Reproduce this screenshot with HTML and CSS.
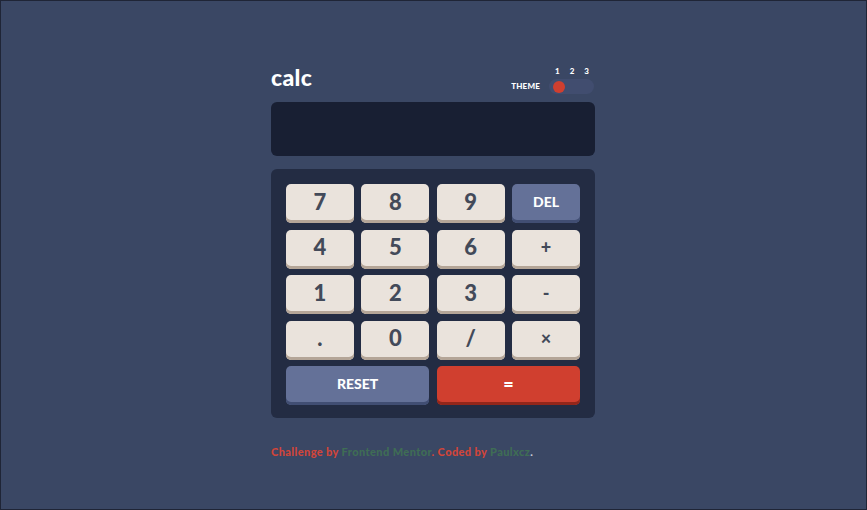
FILE: index.html
```html
<!DOCTYPE html>
<html>
<head>
<meta charset="utf-8">
<link rel="stylesheet" href="styles.css">
</head>
<body>
<div class="page">
  <main class="calc">
    <header class="top">
      <h1 class="logo">calc</h1>
      <div class="theme">
        <span class="theme-label">THEME</span>
        <div class="switch-wrap">
          <div class="nums"><span>1</span><span>2</span><span>3</span></div>
          <div class="switch"><span class="knob"></span></div>
        </div>
      </div>
    </header>
    <div class="screen"></div>
    <div class="keypad">
      <button class="key">7</button>
      <button class="key">8</button>
      <button class="key">9</button>
      <button class="key alt small">DEL</button>
      <button class="key">4</button>
      <button class="key">5</button>
      <button class="key">6</button>
      <button class="key op">+</button>
      <button class="key">1</button>
      <button class="key">2</button>
      <button class="key">3</button>
      <button class="key op">-</button>
      <button class="key">.</button>
      <button class="key">0</button>
      <button class="key">/</button>
      <button class="key op">×</button>
      <button class="key alt small wide">RESET</button>
      <button class="key eq small wide">=</button>
    </div>
    <p class="credit"><span class="red">Challenge by </span><span class="green">Frontend Mentor</span><span class="red">. Coded by </span><span class="green">Paulxcz</span><span class="white">.</span></p>
  </main>
</div>
</body>
</html>
```
FILE: styles.css
```css
* { box-sizing: border-box; margin: 0; padding: 0; }
html, body { width: 867px; height: 510px; overflow: hidden; }
body { background: #3a4764; font-family: "Lato", "Open Sans", sans-serif; }
.page {
  width: 867px; height: 510px;
  border: 1px solid #1f2536;
  display: flex; justify-content: flex-start;
}
.calc { width: 324px; margin-top: 64px; margin-left: 270px; }
.top { display: flex; justify-content: space-between; align-items: flex-end; height: 29px; padding-right: 1px; }
.logo { color: #fff; font-size: 23px; font-weight: 900; line-height: 24px; letter-spacing: 0.3px; padding-bottom: 5px; }
.theme { display: flex; align-items: flex-end; gap: 9px; }
.theme-label { color: #fff; font-size: 8px; font-weight: 900; letter-spacing: 0.2px; padding-bottom: 3px; }
.switch-wrap { display: flex; flex-direction: column; width: 45px; }
.nums { display: flex; justify-content: space-between; padding: 0 5px 0 6px; color: #fff; font-size: 8px; font-weight: 900; line-height: 10px; margin-bottom: 3px; }
.switch { height: 15px; border-radius: 8px; padding: 2px 3px; display: flex; background: #414d6f; }
.knob { width: 12px; height: 12px; border-radius: 50%; background: #d03f2f; margin-left: 1px; margin-top: -0.5px; }
.screen { margin-top: 8px; height: 54px; background: #181f33; border-radius: 6px; }
.keypad {
  margin-top: 13px; background: #232c43; border-radius: 6px;
  padding: 15px 15px 13px 15px;
  display: grid; grid-template-columns: repeat(4, 1fr); column-gap: 7.5px; row-gap: 6.5px;
}
.key {
  height: 39px; border: none; border-radius: 5px;
  background: #eae3dc; box-shadow: inset 0 -3px 0 #b4a597;
  color: #434a59; font-family: "Lato", sans-serif; font-weight: 900; font-size: 22px;
  padding-bottom: 4px; line-height: 1;
}
.key.op { font-size: 18px; }
.key.small { font-size: 14px; color: #fff; }
.key.alt { background: #647198; box-shadow: inset 0 -3px 0 #414e73; }
.key.eq { background: #d03f2f; box-shadow: inset 0 -3px 0 #93261a; font-size: 18px; }
.key.wide { grid-column: span 2; }
.credit { margin-top: 27px; font-size: 11px; font-weight: 900; letter-spacing: 0.4px; }
.red { color: #d1453a; }
.green { color: #3f6d55; }
.white { color: #c8cdd8; }
```
